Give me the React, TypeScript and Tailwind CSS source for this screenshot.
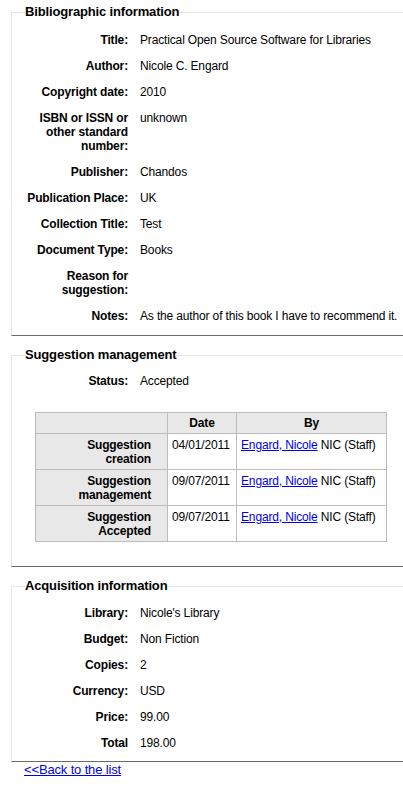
import React from 'react';

type Row = { label: string; value?: React.ReactNode };

const biblio: Row[] = [
  { label: 'Title:', value: 'Practical Open Source Software for Libraries' },
  { label: 'Author:', value: 'Nicole C. Engard' },
  { label: 'Copyright date:', value: '2010' },
  { label: 'ISBN or ISSN or other standard number:', value: 'unknown' },
  { label: 'Publisher:', value: 'Chandos' },
  { label: 'Publication Place:', value: 'UK' },
  { label: 'Collection Title:', value: 'Test' },
  { label: 'Document Type:', value: 'Books' },
  { label: 'Reason for suggestion:' },
  { label: 'Notes:', value: 'As the author of this book I have to recommend it.' },
];

const acquisition: Row[] = [
  { label: 'Library:', value: "Nicole's Library" },
  { label: 'Budget:', value: 'Non Fiction' },
  { label: 'Copies:', value: '2' },
  { label: 'Currency:', value: 'USD' },
  { label: 'Price:', value: '99.00' },
  { label: 'Total', value: '198.00' },
];

const history = [
  { step: ['Suggestion', 'creation'], date: '04/01/2011' },
  { step: ['Suggestion', 'management'], date: '09/07/2011' },
  { step: ['Suggestion', 'Accepted'], date: '09/07/2011' },
];

function InfoRow({ label, value }: Row) {
  return (
    <div className="flex py-[6px] leading-[14px]">
      <div className="w-[116px] shrink-0 text-right font-bold">{label}</div>
      <div className="pl-[12px] whitespace-nowrap">{value}</div>
    </div>
  );
}

function Section({
  title,
  className,
  children,
}: {
  title: string;
  className: string;
  children: React.ReactNode;
}) {
  return (
    <fieldset
      className={`ml-[11px] w-[calc(100%-11px)] border-l border-t border-[#e6e6e6] border-b border-b-[#6b6b6b] ${className}`}
    >
      <legend className="ml-[13px] p-0 text-[13px] leading-[16px] font-bold">{title}</legend>
      {children}
    </fieldset>
  );
}

export default function App() {
  return (
    <div
      className="min-h-[787px] bg-white text-[12px] tracking-[-0.15px] text-black"
      style={{ fontFamily: '"Liberation Sans", Arial, sans-serif' }}
    >
      <div className="pt-[4px]">
        <Section title="Bibliographic information" className="pt-[7px] pb-[6px]">
          {biblio.map((r) => (
            <InfoRow key={r.label} {...r} />
          ))}
        </Section>

        <Section title="Suggestion management" className="mt-[11px] pt-[5px] pb-[24px]">
          <InfoRow label="Status:" value="Accepted" />
          <table className="mt-[18px] ml-[23px] border-collapse leading-[14px]">
            <thead>
              <tr className="bg-[#e8e8e8]">
                <th className="w-[132px] border border-[#bcbcbc]"></th>
                <th className="w-[69px] border border-[#bcbcbc] pt-[3px] pb-[3px] font-bold">Date</th>
                <th className="w-[150px] border border-[#bcbcbc] pt-[3px] pb-[3px] font-bold">By</th>
              </tr>
            </thead>
            <tbody>
              {history.map((h) => (
                <tr key={h.step.join(' ')}>
                  <th className="border border-[#bcbcbc] bg-[#e8e8e8] pt-[4px] pb-[3px] pr-[16px] text-right align-top font-bold">
                    {h.step[0]}
                    <br />
                    {h.step[1]}
                  </th>
                  <td className="border border-[#bcbcbc] pt-[4px] pb-[3px] pl-[4px] align-top whitespace-nowrap">
                    {h.date}
                  </td>
                  <td className="border border-[#bcbcbc] pt-[4px] pb-[3px] pl-[4px] align-top whitespace-nowrap">
                    <a href="#" className="text-[#0000ee] underline">
                      Engard, Nicole
                    </a>{' '}
                    NIC (Staff)
                  </td>
                </tr>
              ))}
            </tbody>
          </table>
        </Section>

        <Section title="Acquisition information" className="mt-[11px] pt-[6px] pb-[5px]">
          {acquisition.map((r) => (
            <InfoRow key={r.label} {...r} />
          ))}
        </Section>

        <a href="#" className="ml-[24px] block w-fit text-[13px] leading-[16px] text-[#0000ee] underline">
          &lt;&lt;Back to the list
        </a>
      </div>
    </div>
  );
}
